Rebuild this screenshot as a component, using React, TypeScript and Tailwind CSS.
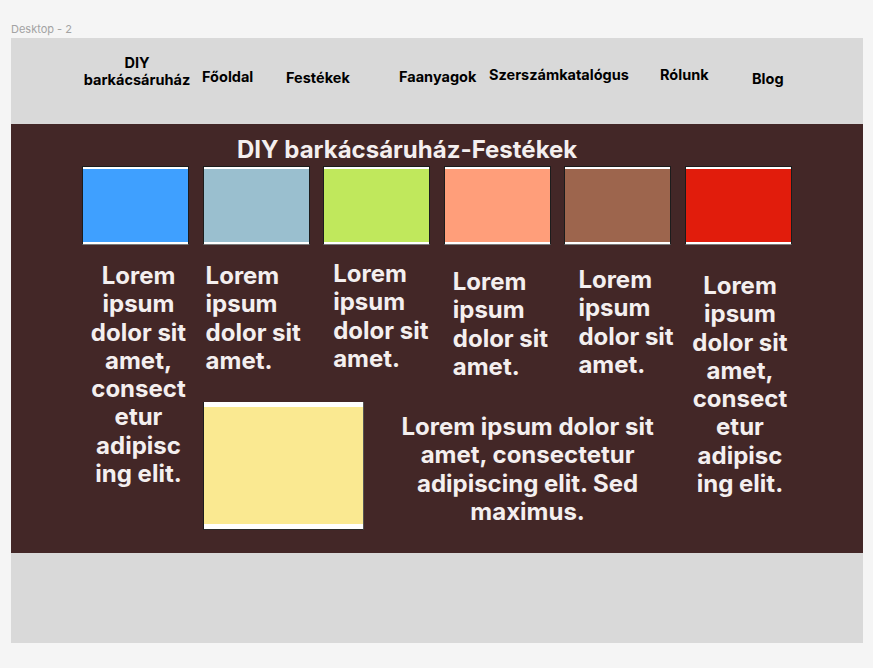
import React from 'react';

const font = "font-['Inter','Liberation_Sans',sans-serif]";

interface SwatchProps {
  color: string;
}

const Swatch: React.FC<SwatchProps> = ({ color }) => (
  <div className="w-[107px] h-[79px] shrink-0 bg-white border border-[#1c1c1c] border-b-[#7a7a7a] py-[2px]">
    <div className={`h-full ${color}`}></div>
  </div>
);

interface BlurbProps {
  lines: string[];
  className?: string;
}

const Blurb: React.FC<BlurbProps> = ({ lines, className = '' }) => (
  <div className={`text-[24px] leading-[28.3px] font-bold text-[#f4efef] ${className}`}>
    {lines.map((line, i) => (
      <div key={i} className="whitespace-nowrap">{line}</div>
    ))}
  </div>
);

const shortText = ['Lorem', 'ipsum', 'dolor sit', 'amet.'];
const longText = ['Lorem', 'ipsum', 'dolor sit', 'amet,', 'consect', 'etur', 'adipisc', 'ing elit.'];

export default function App() {
  return (
    <div className={`min-h-screen bg-[#f5f5f5] pt-[22px] ${font}`}>
      <div className="pl-[11px] text-[11px] leading-[14px] text-[#a3a3a3]">Desktop - 2</div>

      <div className="ml-[11px] mt-[2px] w-[852px]">
        {/* header */}
        <div className="h-[86px] bg-[#d9d9d9] flex items-start pl-[72px] text-[14.5px] leading-[17px] font-bold text-black">
          <div className="w-[119px] mt-[16px]">
            <div className="w-[108px] text-center">
              <div>DIY</div>
              <div className="whitespace-nowrap">barkácsáruház</div>
            </div>
          </div>
          <div className="w-[84px] mt-[30px]">Főoldal</div>
          <div className="w-[113px] mt-[31px]">Festékek</div>
          <div className="w-[90px] mt-[30px]">Faanyagok</div>
          <div className="w-[171px] mt-[28px]">Szerszámkatalógus</div>
          <div className="w-[92px] mt-[28px]">Rólunk</div>
          <div className="mt-[32px]">Blog</div>
        </div>

        {/* main */}
        <div className="h-[429px] bg-[#432727] pt-[12px]">
          <h1 className="pl-[226px] text-[24px] leading-[28px] font-bold text-[#f4efef]">
            DIY barkácsáruház-Festékek
          </h1>

          <div className="mt-[2px] pl-[71px] flex items-start gap-[13.6px]">
            {/* column 1 */}
            <div className="w-[107px] flex flex-col">
              <Swatch color="bg-[#3fa0ff]" />
              <Blurb lines={longText} className="mt-[17px] w-[107px] pl-[6px] text-center" />
            </div>

            {/* middle columns */}
            <div className="flex flex-col">
              <div className="flex gap-[13.6px]">
                <Swatch color="bg-[#9abfcf]" />
                <Swatch color="bg-[#c0e85c]" />
                <Swatch color="bg-[#ff9e7a]" />
                <Swatch color="bg-[#9d654d]" />
              </div>
              <div className="flex items-start gap-[13.6px]">
                <div className="w-[107px]">
                  <Blurb lines={shortText} className="mt-[17px] pl-[3px]" />
                </div>
                <div className="w-[107px]">
                  <Blurb lines={shortText} className="mt-[15px] pl-[10px]" />
                </div>
                <div className="w-[107px]">
                  <Blurb lines={shortText} className="mt-[23px] pl-[9px]" />
                </div>
                <div className="w-[107px]">
                  <Blurb lines={shortText} className="mt-[21px] pl-[14px]" />
                </div>
              </div>
              <div className="mt-[21px] flex items-start">
                <div className="w-[161px] h-[128px] bg-white border-l border-[#1c1c1c] border-b border-b-[#2a2a2a] border-r border-r-[#555] pt-[5px] pb-[5px]">
                  <div className="h-full bg-[#fae991]"></div>
                </div>
                <Blurb
                  lines={['Lorem ipsum dolor sit', 'amet, consectetur', 'adipiscing elit. Sed', 'maximus.']}
                  className="ml-[34px] mt-[11px] w-[260px] text-center"
                />
              </div>
            </div>

            {/* column 6 */}
            <div className="w-[107px] flex flex-col">
              <Swatch color="bg-[#e11c0c]" />
              <Blurb lines={longText} className="mt-[27px] w-[107px] pl-[3px] text-center" />
            </div>
          </div>
        </div>

        {/* footer */}
        <div className="h-[90px] bg-[#d9d9d9]"></div>
      </div>
    </div>
  );
}
